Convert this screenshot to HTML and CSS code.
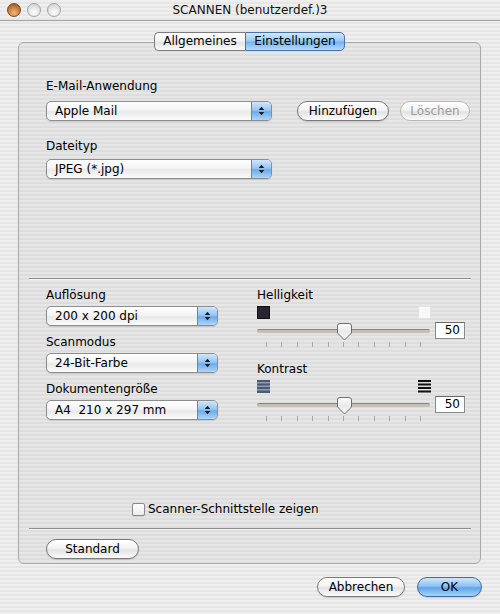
FILE: index.html
```html
<!DOCTYPE html>
<html lang="de">
<head>
    <meta charset="UTF-8">
    <meta name="viewport" content="width=device-width, initial-scale=1.0">
    <title>SCANNEN (benutzerdef.)3</title>
    <link rel="stylesheet" href="styles.css">
</head>
<body>
<div class="window">
    <div class="titlebar">
        <div class="lights">
            <span class="light light-close"></span>
            <span class="light"></span>
            <span class="light"></span>
        </div>
        <div class="title">SCANNEN (benutzerdef.)3</div>
        <div></div>
    </div>

    <div class="panel">
        <div class="tabs">
            <div class="tab tab-first">Allgemeines</div>
            <div class="tab tab-last tab-active">Einstellungen</div>
        </div>

        <div class="mail-section">
            <div class="label">E-Mail-Anwendung</div>
            <div class="row">
                <div class="popup popup-wide">
                    <span class="popup-text">Apple Mail</span>
                    <span class="popup-arrows"><svg width="7" height="10" viewBox="0 0 7 10"><path d="M3.5 0.8 L6.3 4 H0.7 Z M0.7 6 H6.3 L3.5 9.2 Z" fill="#1c1c1c"/></svg></span>
                </div>
                <button class="btn btn-add">Hinzufügen</button>
                <button class="btn btn-delete" disabled>Löschen</button>
            </div>
            <div class="label label-gap">Dateityp</div>
            <div class="popup popup-wide popup-tight">
                <span class="popup-text">JPEG (*.jpg)</span>
                <span class="popup-arrows"><svg width="7" height="10" viewBox="0 0 7 10"><path d="M3.5 0.8 L6.3 4 H0.7 Z M0.7 6 H6.3 L3.5 9.2 Z" fill="#1c1c1c"/></svg></span>
            </div>
        </div>

        <div class="sep"></div>

        <div class="scan-section">
            <div class="col-left">
                <div class="label">Auflösung</div>
                <div class="popup popup-narrow">
                    <span class="popup-text">200 x 200 dpi</span>
                    <span class="popup-arrows"><svg width="7" height="10" viewBox="0 0 7 10"><path d="M3.5 0.8 L6.3 4 H0.7 Z M0.7 6 H6.3 L3.5 9.2 Z" fill="#1c1c1c"/></svg></span>
                </div>
                <div class="label label-mid">Scanmodus</div>
                <div class="popup popup-narrow">
                    <span class="popup-text">24-Bit-Farbe</span>
                    <span class="popup-arrows"><svg width="7" height="10" viewBox="0 0 7 10"><path d="M3.5 0.8 L6.3 4 H0.7 Z M0.7 6 H6.3 L3.5 9.2 Z" fill="#1c1c1c"/></svg></span>
                </div>
                <div class="label label-mid">Dokumentengröße</div>
                <div class="popup popup-narrow">
                    <span class="popup-text">A4&nbsp; 210 x 297 mm</span>
                    <span class="popup-arrows"><svg width="7" height="10" viewBox="0 0 7 10"><path d="M3.5 0.8 L6.3 4 H0.7 Z M0.7 6 H6.3 L3.5 9.2 Z" fill="#1c1c1c"/></svg></span>
                </div>
            </div>

            <div class="col-right">
                <div class="label">Helligkeit</div>
                <div class="icon-row">
                    <span class="swatch swatch-dark"></span>
                    <span class="swatch swatch-light"></span>
                </div>
                <div class="slider-row">
                    <div class="slider">
                        <div class="track"></div>
                        <svg class="thumb" width="15" height="18" viewBox="0 0 15 18">
                            <defs>
                                <linearGradient id="tg1" x1="0" y1="0" x2="0" y2="1">
                                    <stop offset="0" stop-color="#ffffff"/>
                                    <stop offset="0.5" stop-color="#e9e9e9"/>
                                    <stop offset="1" stop-color="#fafafa"/>
                                </linearGradient>
                            </defs>
                            <path d="M3 0.5 H12 Q14.5 0.5 14.5 3 V10 L7.5 17 L0.5 10 V3 Q0.5 0.5 3 0.5 Z" fill="url(#tg1)" stroke="#6f6f6f"/>
                        </svg>
                    </div>
                    <div class="value">50</div>
                </div>
                <div class="ticks">
                    <i></i><i></i><i></i><i></i><i></i><i></i><i></i><i></i><i></i><i></i><i></i>
                </div>

                <div class="label label-contrast">Kontrast</div>
                <div class="icon-row">
                    <svg width="13" height="13" viewBox="0 0 13 13">
                        <rect x="0" y="0" width="13" height="13" fill="#8e9bb2"/>
                        <rect x="0" y="0" width="13" height="2" fill="#4c5a74"/>
                        <rect x="0" y="3.5" width="13" height="2" fill="#4c5a74"/>
                        <rect x="0" y="7" width="13" height="2" fill="#4c5a74"/>
                        <rect x="0" y="10.5" width="13" height="2.5" fill="#4c5a74"/>
                    </svg>
                    <svg width="13" height="13" viewBox="0 0 13 13">
                        <rect x="0" y="0" width="13" height="2" fill="#111"/>
                        <rect x="0" y="3.5" width="13" height="2" fill="#111"/>
                        <rect x="0" y="7" width="13" height="2" fill="#111"/>
                        <rect x="0" y="10.5" width="13" height="2" fill="#111"/>
                    </svg>
                </div>
                <div class="slider-row">
                    <div class="slider">
                        <div class="track"></div>
                        <svg class="thumb" width="15" height="18" viewBox="0 0 15 18">
                            <path d="M3 0.5 H12 Q14.5 0.5 14.5 3 V10 L7.5 17 L0.5 10 V3 Q0.5 0.5 3 0.5 Z" fill="url(#tg1)" stroke="#6f6f6f"/>
                        </svg>
                    </div>
                    <div class="value">50</div>
                </div>
                <div class="ticks">
                    <i></i><i></i><i></i><i></i><i></i><i></i><i></i><i></i><i></i><i></i><i></i>
                </div>
            </div>
        </div>

        <label class="check-row"><span class="checkbox"></span>Scanner-Schnittstelle zeigen</label>

        <div class="sep sep-bottom"></div>

        <div class="std-row">
            <button class="btn btn-std">Standard</button>
        </div>
    </div>

    <div class="footer">
        <button class="btn btn-cancel">Abbrechen</button>
        <button class="btn btn-ok">OK</button>
    </div>
</div>
</body>
</html>
```
FILE: styles.css
```css
body {
    margin: 0;
    padding: 0;
    font-family: "DejaVu Sans", "Liberation Sans", sans-serif;
    font-size: 12px;
    color: #000;
    background: #ececec;
}
.window {
    width: 500px;
    height: 614px;
    overflow: hidden;
    background: repeating-linear-gradient(to bottom, #efefef 0, #efefef 2px, #e6e6e6 2px, #e6e6e6 4px);
}

/* title bar */
.titlebar {
    height: 20px;
    border-bottom: 1px solid #a2a2a2;
    display: grid;
    grid-template-columns: 1fr auto 1fr;
    align-items: center;
}
.lights {
    display: flex;
    gap: 6px;
    padding-left: 7px;
}
.light {
    width: 12px;
    height: 12px;
    border-radius: 50%;
    border: 1px solid #a3a3a3;
    background: radial-gradient(circle at 50% 70%, #ffffff 0, #e6e6e6 50%, #c9c9c9 100%);
}
.light-close {
    border-color: #7a4a26;
    background: radial-gradient(circle at 50% 75%, #f3b77a 0, #c77a3c 55%, #8e4e22 100%);
}
.title {
    font-size: 12px;
    color: #111;
}

/* tab panel */
.panel {
    margin: 21px 19px 0 18px;
    height: 522px;
    box-sizing: border-box;
    border: 1px solid #a9a9a9;
    border-radius: 6px;
    background-color: rgba(0, 0, 0, 0.035);
}
.tabs {
    display: flex;
    justify-content: center;
    margin-top: -11px;
}
.tab {
    height: 19px;
    box-sizing: border-box;
    line-height: 17px;
    text-align: center;
    border: 1px solid #7c7c7c;
    background: linear-gradient(to bottom, #ffffff 0, #f3f3f3 45%, #e4e4e4 55%, #f8f8f8 100%);
}
.tab-first {
    width: 91px;
    border-radius: 5px 0 0 5px;
    border-right: none;
}
.tab-last {
    width: 100px;
    border-radius: 0 5px 5px 0;
}
.tab-active {
    border-color: #4a72a6;
    background: linear-gradient(to bottom, #d2e9fd 0, #9ccbf5 45%, #78b3ee 55%, #b5dcfb 100%);
}

.label {
    height: 16px;
    line-height: 16px;
}
.label-gap {
    margin-top: 17px;
}
.label-mid {
    margin-top: 8px;
}
.label-contrast {
    margin-top: 14px;
}

.mail-section {
    box-sizing: border-box;
    height: 227px;
    padding: 27px 0 0 27px;
}
.row {
    display: flex;
    align-items: center;
    margin-top: 7px;
}

/* popup buttons */
.popup {
    height: 20px;
    box-sizing: border-box;
    display: flex;
    align-items: stretch;
    border: 1px solid #8d8d8d;
    border-radius: 5px;
    overflow: hidden;
    background: linear-gradient(to bottom, #ffffff 0, #f4f4f4 45%, #e9e9e9 55%, #fbfbfb 100%);
    box-shadow: 0 1px 1px rgba(0, 0, 0, 0.12);
}
.popup-tight {
    margin-top: 5px;
}
.col-left .popup {
    margin-top: 3px;
}
.popup-wide {
    width: 226px;
}
.popup-narrow {
    width: 172px;
}
.popup-text {
    flex: 1;
    padding-left: 8px;
    line-height: 18px;
    white-space: nowrap;
}
.popup-arrows {
    width: 19px;
    display: flex;
    align-items: center;
    justify-content: center;
    border-left: 1px solid #5f86bd;
    background: linear-gradient(to bottom, #cfe6fc 0, #97c6f3 45%, #6eaaea 55%, #add6fb 100%);
}

/* push buttons */
.btn {
    height: 20px;
    box-sizing: border-box;
    padding: 0;
    font-family: inherit;
    font-size: 12px;
    color: #000;
    border: 1px solid #7a7a7a;
    border-radius: 10px;
    background: linear-gradient(to bottom, #ffffff 0, #f3f3f3 45%, #e3e3e3 55%, #fbfbfb 100%);
    box-shadow: 0 1px 1px rgba(0, 0, 0, 0.15);
}
.btn-add {
    width: 92px;
    margin-left: 25px;
}
.btn-delete {
    width: 70px;
    margin-left: 11px;
    color: #9c9c9c;
    border-color: #b8b8b8;
    box-shadow: none;
}
.btn-std {
    width: 93px;
}
.btn-cancel {
    width: 88px;
}
.btn-ok {
    width: 65px;
    border-color: #3f6aa3;
    background: linear-gradient(to bottom, #cfe7fd 0, #8fc2f3 45%, #62a3e8 55%, #a8d4fb 100%);
}

.sep {
    height: 1px;
    background: #8f8f8f;
    border-bottom: 1px solid #f4f4f4;
    margin-left: 10px;
    margin-right: 9px;
}

/* resolution / brightness */
.scan-section {
    display: flex;
    margin-top: 7px;
    padding-left: 27px;
}
.col-left {
    width: 172px;
}
.col-right {
    margin-left: 39px;
    width: 208px;
}
.icon-row {
    width: 174px;
    display: flex;
    justify-content: space-between;
    margin-top: 3px;
    height: 13px;
}
.swatch {
    width: 13px;
    height: 13px;
    box-sizing: border-box;
}
.swatch-dark {
    background: #2a2530;
    border: 1px solid #111;
}
.swatch-light {
    background: #f8f8f8;
    border: 1px solid #e4e4e4;
}
.slider-row {
    display: flex;
    align-items: center;
    margin-top: 3px;
    height: 17px;
}
.slider {
    position: relative;
    width: 173px;
    height: 17px;
    display: flex;
    align-items: center;
}
.track {
    width: 100%;
    height: 4px;
    box-sizing: border-box;
    border-radius: 2px;
    border-top: 1px solid #8c847a;
    background: #c6bfb6;
}
.thumb {
    position: absolute;
    left: 80px;
    top: 1px;
}
.value {
    width: 30px;
    height: 17px;
    box-sizing: border-box;
    margin-left: 5px;
    border: 1px solid #8a8a8a;
    border-top-color: #6a6a6a;
    background: #fff;
    text-align: right;
    padding-right: 4px;
    line-height: 15px;
}
.ticks {
    width: 173px;
    box-sizing: border-box;
    padding: 0 9px;
    display: flex;
    justify-content: space-between;
    margin-top: 3px;
}
.ticks i {
    width: 1px;
    height: 5px;
    background: #a8a8a8;
}

/* checkbox */
.check-row {
    display: flex;
    align-items: center;
    gap: 3px;
    height: 16px;
    margin-top: 80px;
    padding-left: 113px;
}
.checkbox {
    width: 13px;
    height: 13px;
    box-sizing: border-box;
    border: 1px solid #8a8a8a;
    border-radius: 2px;
    background: linear-gradient(to bottom, #ffffff 0, #ececec 100%);
    box-shadow: 0 1px 1px rgba(0, 0, 0, 0.1);
}
.sep-bottom {
    margin-top: 11px;
}
.std-row {
    padding-left: 27px;
    margin-top: 9px;
}

.footer {
    display: flex;
    justify-content: flex-end;
    gap: 12px;
    padding-right: 18px;
    margin-top: 13px;
}
```
